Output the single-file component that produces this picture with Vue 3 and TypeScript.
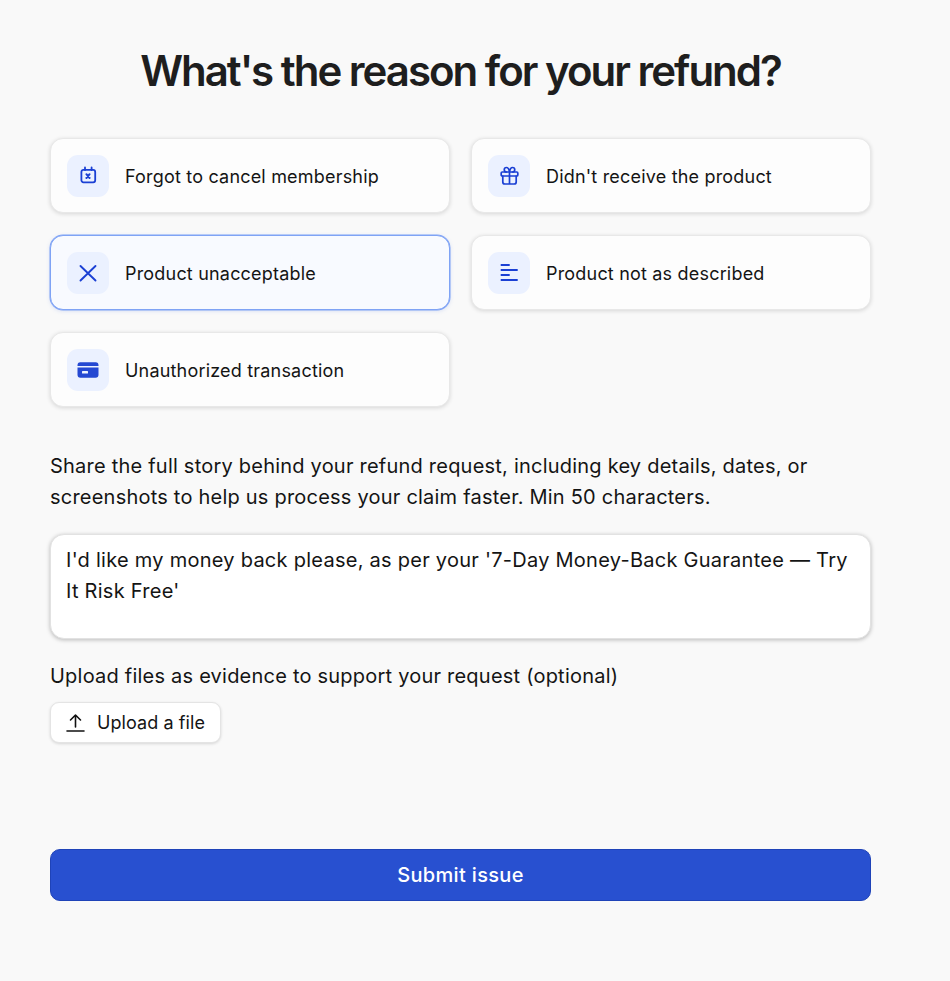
<script setup lang="ts">
interface Reason { label: string; icon: string; selected?: boolean }
const reasons: Reason[] = [
  { label: 'Forgot to cancel membership', icon: 'calendar' },
  { label: "Didn't receive the product", icon: 'gift' },
  { label: 'Product unacceptable', icon: 'x', selected: true },
  { label: 'Product not as described', icon: 'lines' },
  { label: 'Unauthorized transaction', icon: 'card' },
]
</script>

<template>
  <main class="page">
    <h1 class="title">What's the reason for your refund?</h1>
    <div class="grid">
      <button v-for="r in reasons" :key="r.label" class="card" :class="{ selected: r.selected }" type="button">
        <span class="icon">
          <svg v-if="r.icon === 'calendar'" width="20" height="20" viewBox="0 0 20 20" fill="none" stroke="#1b40d4" stroke-width="1.8" stroke-linecap="round" stroke-linejoin="round">
            <rect x="3.4" y="3.9" width="13.8" height="12.400" rx="2" />
            <path d="M7 1.500V4M13.600 1.500V4" />
            <path d="M8.400 8.200l3.200 3.800M11.600 8.200l-3.200 3.800" stroke-width="2" />
          </svg>
          <svg v-else-if="r.icon === 'gift'" width="20" height="20" viewBox="0 0 20 20" fill="none" stroke="#1b40d4" stroke-width="1.7" stroke-linecap="round" stroke-linejoin="round">
            <rect x="2.200" y="6" width="16.600" height="4" rx="1" />
            <path d="M3.800 10v6a2 2 0 0 0 2 2h9.400a2 2 0 0 0 2-2v-6M10.500 6v12M10.500 6S9.800 1.500 7.500 1.500a2.250 2.250 0 0 0 0 4.500M10.500 6s.7-4.500 3-4.500a2.250 2.250 0 0 1 0 4.500" />
          </svg>
          <svg v-else-if="r.icon === 'x'" width="20" height="20" viewBox="0 0 20 20" fill="none" stroke="#1b40d4" stroke-width="1.900" stroke-linecap="round">
            <path d="M2.500 3l15 14.500M17.500 3 2.500 17.500" />
          </svg>
          <svg v-else-if="r.icon === 'lines'" width="20" height="20" viewBox="0 0 20 20" fill="none" stroke="#1b40d4" stroke-width="1.800" stroke-linecap="butt">
            <path d="M1.700 2h9M1.700 7h17M1.700 12h9M1.700 17h17" />
          </svg>
          <svg v-else width="22" height="22" viewBox="0 0 22 22">
            <path fill="#2448d2" d="M3.300 3.300h15.400a3 3 0 0 1 2.800 3v.7H.5v-.7a3 3 0 0 1 2.800-3ZM.5 8.600h21v7.100a3 3 0 0 1-3 3h-15a3 3 0 0 1-3-3Z" />
            <rect x="5" y="12" width="6" height="2.600" rx=".5" fill="#eef3fe" />
          </svg>
        </span>
        <span class="label">{{ r.label }}</span>
      </button>
    </div>

    <p class="intro">Share the full story behind your refund request, including key details, dates, or screenshots to help us process your claim faster. Min 50 characters.</p>
    <div class="textarea">I'd like my money back please, as per your '7-Day Money-Back Guarantee — Try It Risk Free'</div>
    <p class="upload-label">Upload files as evidence to support your request (optional)</p>
    <button class="upload" type="button">
      <svg width="20" height="20" viewBox="0 0 20 20" fill="none" stroke="#111" stroke-width="1.600" stroke-linecap="round" stroke-linejoin="round">
        <path d="M9.500 14V2M4.500 7l5-5 5 5M1 18h17" />
      </svg>
      <span>Upload a file</span>
    </button>
    <button class="submit" type="button">Submit issue</button>
  </main>
</template>

<style>
html, body { margin: 0; background: #f9f9f9; }
</style>

<style scoped>
.page {
  box-sizing: border-box;
  width: 821px;
  height: 981px;
  margin-left: 50px;
  padding-top: 44px;
  font-family: Inter, "Liberation Sans", sans-serif;
  color: #141414;
  display: flex;
  flex-direction: column;
  align-items: flex-start;
}
.title {
  width: 100%;
  margin: 0;
  font-size: 42px;
  line-height: 54px;
  font-weight: 600;
  letter-spacing: -2px;
  text-align: center;
  color: #1e1e1e;
}
.grid {
  width: 100%;
  margin-top: 40px;
  display: grid;
  grid-template-columns: 400px 400px;
  column-gap: 21px;
  row-gap: 22px;
}
.card {
  box-sizing: border-box;
  height: 75px;
  padding: 0 16px;
  display: flex;
  align-items: center;
  gap: 16px;
  background: #fdfdfd;
  border: 1px solid #e8e8e8;
  border-radius: 13px;
  box-shadow: 0 1px 4px rgba(0, 0, 0, 0.14);
  font: inherit;
  color: inherit;
  text-align: left;
}
.card.selected {
  background: #f8faff;
  border-color: #7fa3f5;
  box-shadow: 0 0 0 0.5px #7fa3f5, 0 1px 4px rgba(60, 100, 220, 0.18);
}
.icon {
  width: 42px;
  height: 42px;
  border-radius: 11px;
  background: #ebf1ff;
  display: flex;
  align-items: center;
  justify-content: center;
  flex: none;
}
.label {
  padding-top: 2px;
  font-size: 18px;
  line-height: 24px;
  font-weight: 400;
  letter-spacing: 0.19px;
}
.intro {
  width: 790px;
  margin: 44px 0 0;
  font-size: 20px;
  line-height: 31px;
  letter-spacing: 0.22px;
}
.textarea {
  box-sizing: border-box;
  width: 100%;
  height: 105px;
  margin-top: 21px;
  padding: 10px 15px;
  background: #fff;
  border: 1px solid #e2e2e2;
  border-radius: 14px;
  box-shadow: 0 1px 4px rgba(0, 0, 0, 0.26);
  font-size: 20px;
  line-height: 31px;
  letter-spacing: 0.26px;
}
.upload-label {
  margin: 22px 0 0;
  font-size: 20px;
  line-height: 31px;
  letter-spacing: 0.22px;
}
.upload {
  box-sizing: border-box;
  height: 41px;
  width: 171px;
  margin-top: 10px;
  display: flex;
  align-items: center;
  justify-content: center;
  gap: 11px;
  background: #fff;
  border: 1px solid #e4e4e4;
  border-radius: 9px;
  box-shadow: 0 1px 3px rgba(0, 0, 0, 0.14);
  font: inherit;
  font-size: 18px;
  letter-spacing: 0.08px;
  color: inherit;
}
.submit {
  box-sizing: border-box;
  width: 100%;
  height: 52px;
  margin-top: 106px;
  background: #2850d0;
  border: 1px solid #1f43b8;
  border-radius: 10px;
  color: #fff;
  font: inherit;
  font-size: 20px;
  font-weight: 500;
  letter-spacing: 0.33px;
}
</style>
